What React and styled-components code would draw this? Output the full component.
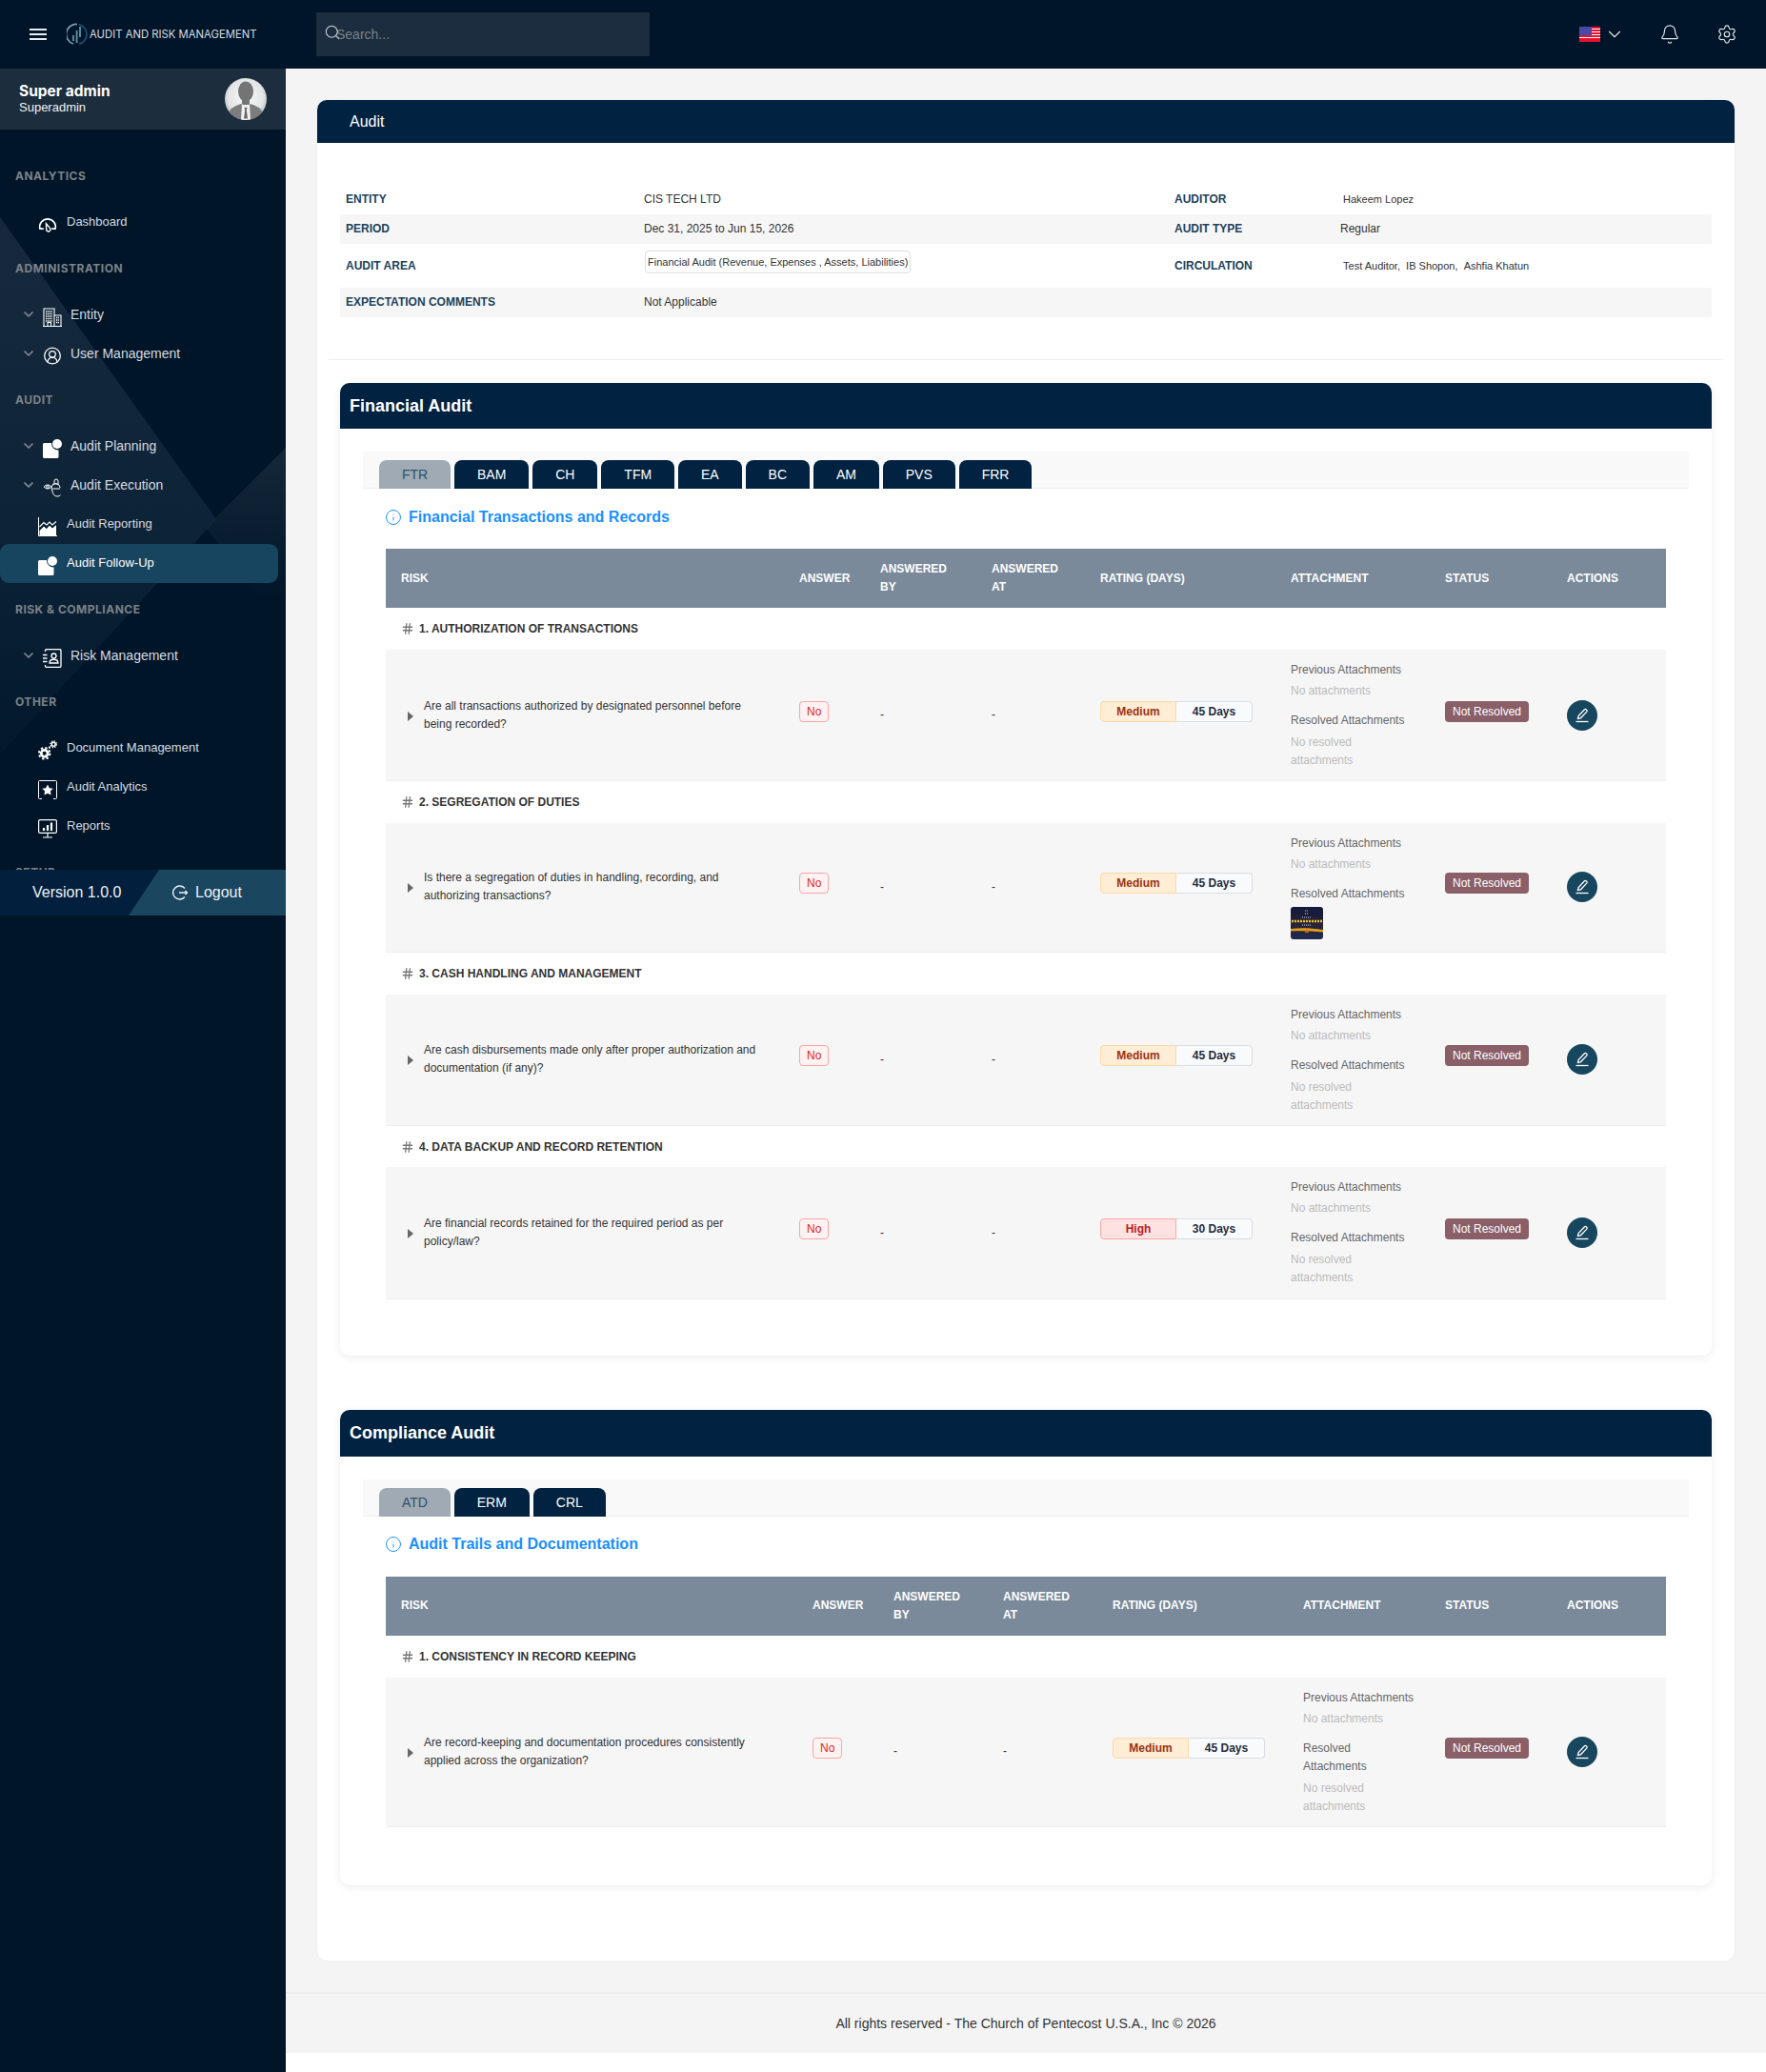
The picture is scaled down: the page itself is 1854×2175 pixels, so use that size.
import React from "react";
import styled, { createGlobalStyle } from "styled-components";
import { Search, ChevronDown, Bell, Settings, Hash, Info, CircleUserRound } from "lucide-react";

const GlobalStyle = createGlobalStyle`
  html, body {
    margin: 0;
    padding: 0;
    background: #fff;
    font-family: "Liberation Sans", Arial, sans-serif;
  }
  * {
    box-sizing: border-box;
  }
`;

const Shell = styled.div`
  width: 1854px;
  min-height: 2175px;
  display: flex;
  flex-direction: column;
`;

/* top bar */
const TopBar = styled.header`
  height: 72px;
  flex: none;
  background: #001529;
  display: flex;
  align-items: center;
  padding-right: 30px;
`;
const Brand = styled.div`
  width: 332px;
  display: flex;
  align-items: center;
  padding-left: 31px;
`;
const Burger = styled.div`
  width: 18px;
  display: flex;
  flex-direction: column;
  gap: 3px;
  margin-right: 21px;
  span {
    display: block;
    height: 2px;
    background: #e8edf1;
  }
`;
const BrandName = styled.span`
  font-family: Inter, "Liberation Sans", sans-serif;
  font-size: 11.3px;
  color: #d5dbe0;
  margin-left: 2px;
  white-space: nowrap;
`;
const SearchBox = styled.div`
  position: relative;
  width: 350px;
  height: 46px;
`;
const SearchInput = styled.input`
  width: 100%;
  height: 100%;
  border: 0;
  outline: 0;
  background: #1b2d3f;
  padding: 0 0 0 21px;
  font-family: "Liberation Sans", Arial, sans-serif;
  font-size: 14px;
  color: #fff;
  &::placeholder {
    color: #77818c;
  }
`;
const SearchGlyph = styled.span`
  position: absolute;
  left: 8px;
  top: 12px;
  color: #d0d5da;
  display: flex;
`;
const TopActions = styled.div`
  margin-left: auto;
  display: flex;
  align-items: center;
  color: #e3e7ea;
`;
const LangPick = styled.div`
  display: flex;
  align-items: center;
  gap: 4.5px;
  margin-right: 35.5px;
`;
const TopIcon = styled.span`
  display: flex;
  margin-left: ${(p) => p.$gap || 0}px;
`;

/* sidebar */
const Body = styled.div`
  flex: 1;
  display: flex;
`;
const Sidebar = styled.aside`
  width: 300px;
  flex: none;
  background: #001528;
  position: relative;
  overflow: hidden;
  &::before {
    content: "";
    position: absolute;
    inset: 0;
    background: linear-gradient(180deg, #16293c 200px, #0d2337 480px, #001528 780px);
    clip-path: polygon(0 156px, 227px 473px, 0 720px);
  }
  &::after {
    content: "";
    position: absolute;
    inset: 0;
    background: linear-gradient(180deg, #15283a 400px, rgba(10, 31, 52, 0) 560px);
    clip-path: polygon(300px 398px, 300px 590px, 216px 482px);
  }
`;
const SideContent = styled.div`
  position: relative;
  z-index: 1;
`;
const UserBox = styled.div`
  height: 64px;
  background: #1c2d3e;
  display: flex;
  align-items: center;
  justify-content: space-between;
  padding: 0 20px;
`;
const UserName = styled.div`
  font-family: Inter, "Liberation Sans", sans-serif;
  font-weight: 700;
  font-size: 15.5px;
  line-height: 18px;
  color: #fff;
  margin-top: -1px;
`;
const UserRole = styled.div`
  font-size: 13px;
  line-height: 15px;
  color: #f0f2f4;
`;
const Nav = styled.nav`
  height: 777px;
  overflow: hidden;
  padding-top: 41px;
`;
const NavGroup = styled.div`
  margin-bottom: 20px;
`;
const NavLabel = styled.div`
  font-family: Inter, "Liberation Sans", sans-serif;
  font-size: 12px;
  line-height: 16px;
  font-weight: 700;
  color: #7c8288;
  padding-left: 16px;
  margin-bottom: 20px;
  letter-spacing: 0.5px;
`;
const NavItem = styled.div`
  height: 41px;
  width: 292px;
  display: flex;
  align-items: center;
  border-radius: 9px;
  padding-left: ${(p) => (p.$caret ? 24 : 40)}px;
  font-size: ${(p) => (p.$caret ? 14 : 13)}px;
  color: ${(p) => (p.$active ? "#fff" : "#d6dbe0")};
  background: ${(p) => (p.$active ? "#17445f" : "transparent")};
`;
const Caret = styled.span`
  width: 16px;
  margin-right: 5px;
  margin-left: -2px;
  color: #7f8a94;
  display: flex;
  margin-top: -2px;
`;
const NavIcon = styled.span`
  width: 20px;
  height: 20px;
  margin-left: ${(p) => (p.$caret ? 2 : 0)}px;
  margin-right: ${(p) => (p.$caret ? 9 : 10)}px;
  margin-top: 4px;
  display: flex;
  align-items: center;
  justify-content: center;
  color: #fff;
`;
const NavText = styled.span`
  margin-top: -2px;
`;
const SideBottom = styled.div`
  height: 48px;
  display: flex;
  background: #02203d;
`;
const VersionTag = styled.div`
  width: 135px;
  padding-left: 34px;
  display: flex;
  align-items: center;
  font-size: 16px;
  color: #eef1f3;
  white-space: nowrap;
`;
const LogoutTag = styled.div`
  flex: 1;
  background: #1a4660;
  clip-path: polygon(32px 0, 100% 0, 100% 100%, 0 100%);
  display: flex;
  align-items: center;
  gap: 8px;
  padding-left: 46px;
  font-size: 16px;
  color: #eef1f3;
`;

/* main */
const Main = styled.main`
  flex: 1;
  min-width: 0;
`;
const Content = styled.div`
  background: #f4f4f4;
  padding: 33px 33px 33px;
`;
const PageCard = styled.div`
  background: #fff;
  border-radius: 10px;
  box-shadow: 0 0 3px rgba(0, 0, 0, 0.05);
  padding-bottom: 79px;
`;
const PageHead = styled.div`
  height: 45px;
  background: #012241;
  border-radius: 10px 10px 0 0;
  color: #fff;
  font-size: 16px;
  display: flex;
  align-items: center;
  padding-left: 34px;
`;
const PageBody = styled.div`
  padding: 44px 24px 0;
`;
const InfoTable = styled.div`
  margin-bottom: 44px;
`;
const InfoRow = styled.div`
  display: grid;
  grid-template-columns: 313px 557px 174px 1fr;
  align-items: center;
  height: ${(p) => p.$h || 31}px;
  padding: 0 0 1px 6px;
  background: ${(p) => (p.$shade ? "#f6f6f6" : "transparent")};
`;
const InfoLabel = styled.div`
  font-size: 12px;
  font-weight: 700;
  color: #21425c;
`;
const InfoValue = styled.div`
  font-size: ${(p) => p.$size || 12}px;
  color: #333;
`;
const AreaChip = styled.span`
  display: block;
  width: fit-content;
  border: 1px solid #dedede;
  border-radius: 4px;
  font-size: 11px;
  line-height: 22px;
  padding: 0 2px;
  margin: 0 0 8px 1px;
`;
const Rule = styled.hr`
  border: 0;
  border-top: 1px solid #eee;
  margin: 0 -12px 24px;
`;
const SectionCard = styled.section`
  background: #fff;
  border-radius: 10px;
  box-shadow: 0 2px 10px rgba(0, 0, 0, 0.08);
  padding-bottom: ${(p) => p.$pb}px;
  margin-bottom: 57px;
  &:last-child {
    margin-bottom: 0;
  }
`;
const SectionHead = styled.h2`
  margin: 0;
  height: ${(p) => p.$h || 48}px;
  background: #012241;
  border-radius: 10px 10px 0 0;
  color: #fff;
  font-size: 18px;
  font-weight: 700;
  display: flex;
  align-items: center;
  padding-left: 10px;
`;
const TabStrip = styled.div`
  margin: 24px 24px 0;
  height: 39px;
  padding: 9px 0 0 17px;
  background: #f9f9f9;
  border-bottom: 1px solid #eee;
  display: flex;
  gap: 4px;
`;
const Tab = styled.div`
  height: 30px;
  padding: 0 23.95px;
  border-radius: 8px 8px 0 0;
  font-size: 14px;
  line-height: 30px;
  color: ${(p) => (p.$active ? "#2e5169" : "#fff")};
  background: ${(p) => (p.$active ? "#a0aab4" : "#012241")};
`;
const TopicTitle = styled.h3`
  margin: 20px 0 24px 47px;
  height: 19px;
  display: flex;
  align-items: center;
  gap: 7px;
  color: #1890ff;
  font-size: 16px;
  font-weight: 700;
`;
const RiskTable = styled.table`
  width: 1344px;
  margin-left: 48px;
  border-collapse: collapse;
  table-layout: fixed;
`;
const HeadCell = styled.th`
  height: 62px;
  background: #7a8a9b;
  color: #fff;
  font-size: 12px;
  line-height: 19px;
  font-weight: 700;
  text-align: left;
  padding: 0 16px;
`;
const CategoryCell = styled.td`
  height: 44px;
  padding: 0 0 0 16px;
  font-size: 12px;
  font-weight: 700;
  color: #333;
`;
const CategoryInner = styled.div`
  display: flex;
  align-items: center;
  gap: 5px;
  color: #333;
  svg {
    color: #777;
  }
`;
const Row = styled.tr`
  background: #f6f6f6;
  border-bottom: 1px solid #eee;
`;
const Cell = styled.td`
  padding: 0 16px;
  vertical-align: middle;
  font-size: 12px;
  line-height: 19px;
  color: #333;
`;
const AttachCell = styled(Cell)`
  padding: 12px 16px 11.3px;
`;
const RiskInner = styled.div`
  display: flex;
  align-items: center;
  gap: 11px;
  padding-left: 7px;
`;
const Expander = styled.span`
  flex: none;
  width: 0;
  height: 0;
  border-left: 6px solid #666;
  border-top: 5px solid transparent;
  border-bottom: 5px solid transparent;
  margin-top: 2px;
`;
const AnswerTag = styled.span`
  display: block;
  width: fit-content;
  height: 22px;
  line-height: 20px;
  padding: 0 7px;
  margin-bottom: 8px;
  border: 1px solid #fca5a5;
  border-radius: 4px;
  background: #fef2f2;
  color: #dc2626;
`;
const Rating = styled.div`
  display: flex;
  margin-bottom: 8px;
  width: 160px;
  height: 22px;
  font-weight: 700;
  line-height: 20px;
  text-align: center;
`;
const RatingLevel = styled.span`
  width: 80px;
  border: 1px solid ${(p) => (p.$high ? "#fca5a5" : "#fdd9a8")};
  border-radius: 4px 0 0 4px;
  background: ${(p) => (p.$high ? "#fee2e2" : "#ffedd5")};
  color: ${(p) => (p.$high ? "#b91c1c" : "#9a3412")};
`;
const RatingDays = styled.span`
  width: 80px;
  border: 1px solid #d9dde3;
  border-left: 0;
  border-radius: 0 4px 4px 0;
  background: #f9fafb;
  color: #1f2d3d;
`;
const AttachTitle = styled.div`
  color: #666;
  margin-bottom: ${(p) => p.$mb || 3}px;
`;
const AttachEmpty = styled.div`
  color: #bbb;
  margin-bottom: ${(p) => p.$mb || 0}px;
`;
const Thumb = styled.div`
  width: 34px;
  height: 34px;
  display: flex;
  border-radius: 3px;
  overflow: hidden;
  margin-bottom: 2px;
`;
const StatusTag = styled.span`
  display: block;
  width: fit-content;
  height: 22px;
  line-height: 22px;
  padding: 0 8px;
  margin-bottom: 8px;
  border-radius: 4px;
  background: #8a5f68;
  color: #fff;
  white-space: nowrap;
`;
const EditButton = styled.button`
  width: 32px;
  height: 32px;
  border: 0;
  border-radius: 50%;
  background: #17465f;
  color: #fff;
  padding: 0;
  display: flex;
  align-items: center;
  justify-content: center;
`;
const Footer = styled.footer`
  height: 64px;
  background: #f4f4f4;
  border-top: 2px solid #ebebeb;
  display: flex;
  align-items: center;
  justify-content: center;
  font-size: 14px;
  color: #333;
`;

/* drawings */
const Logo = () => (
  <svg width="22" height="24" viewBox="0 0 22 24" fill="none">
    <path d="M11 1.5A10.5 10.5 0 0 0 7 22" stroke="#6d9eab" strokeWidth="1.8" />
    <path d="M13 1.8a10.5 10.5 0 0 1 0 20.4" stroke="#1d4f6b" strokeWidth="1.8" />
    <path d="M7 19v-6M10.6 21V8M14 15V4" stroke="#5f95a6" strokeWidth="1.8" />
  </svg>
);

const Flag = () => (
  <svg width="22" height="16" viewBox="0 0 22 16" shapeRendering="crispEdges">
    <rect width="22" height="16" fill="#fff" />
    {[0, 3, 6, 9, 12, 14].map((y) => (
      <rect key={y} y={y} width="22" height="2" fill="#e8112d" />
    ))}
    <rect width="13" height="9" fill="#4a4aa6" />
  </svg>
);

const Avatar = () => (
  <svg width="44" height="44" viewBox="0 0 44 44">
    <defs>
      <radialGradient id="avatarBg" cx="50%" cy="45%" r="60%">
        <stop offset="0%" stopColor="#fbfbfb" />
        <stop offset="70%" stopColor="#e2e4e5" />
        <stop offset="100%" stopColor="#a9adb0" />
      </radialGradient>
      <clipPath id="avatarClip">
        <circle cx="22" cy="22" r="22" />
      </clipPath>
    </defs>
    <circle cx="22" cy="22" r="22" fill="url(#avatarBg)" />
    <g clipPath="url(#avatarClip)">
      <ellipse cx="22" cy="14" rx="8" ry="10.5" fill="#747474" />
      <path d="M18 21h8v7h-8z" fill="#747474" />
      <path d="M5 44v-8c0-5 7-7 12-9l5 4 5-4c5 2 12 4 12 9v8z" fill="#7d7d7d" />
      <path d="M18 27l4 4 4-4 1 17H17z" fill="#f2f2f2" />
      <path d="M20.5 31h3l-.7 2.5 1.2 9h-4l1.2-9z" fill="#666" />
    </g>
  </svg>
);

const GaugeIcon = () => (
  <svg width="20" height="18" viewBox="0 0 24 20" fill="none" stroke="currentColor" strokeWidth="2">
    <path d="M7 15H2.3a10 10 0 1 1 19.4 0H17" />
    <path d="M10.2 8.5l4.4 5.2a2.6 2.6 0 1 1-4.2 2z" strokeWidth="1.7" />
  </svg>
);

const BuildingIcon = () => (
  <svg width="20" height="20" viewBox="0 0 20 20" fill="none" stroke="currentColor" strokeWidth="1.1">
    <path d="M1 19.5V1h11v18.5M0 19.5h20M12 8h7v11.5M5 19.5v-4h3.5v4" />
    <path d="M3 4h7M3 6.5h7M3 9h7M3 11.5h7M3 14h7M14 10.5h3M14 13h3M14 15.5h3" strokeDasharray="1.4 .7" strokeWidth="1.5" />
  </svg>
);

const NoteDotIcon = () => (
  <svg width="20" height="20" viewBox="0 0 20 20" fill="#fff">
    <path d="M1.5 4H9a7 7 0 0 0 7.5 7.5v7a1.5 1.5 0 0 1-1.5 1.5H1.5A1.5 1.5 0 0 1 0 18.5v-13A1.5 1.5 0 0 1 1.5 4z" />
    <circle cx="15" cy="5" r="5" />
  </svg>
);

const ExecutionIcon = () => (
  <svg width="20" height="20" viewBox="0 0 20 20" fill="none" stroke="currentColor" strokeWidth="1">
    <path d="M1 9c2-2.6 6-2.6 8 0-2 2.6-6 2.6-8 0z" />
    <circle cx="5" cy="9" r="1.4" />
    <path d="M12 5V3a2 2 0 1 1 4 0v3M10 6.5c1.500-1 5-1 7 .5M18 10a4.500 4.500 0 1 0-8 3c0 3 2 6 5 6 1.500 0 3-.5 3.500-1.500M10 11h8" />
  </svg>
);

const ChartIcon = () => (
  <svg width="20" height="20" viewBox="0 0 20 20" fill="none">
    <path d="M.5 0v19.500H20" stroke="#fff" strokeWidth="1" />
    <path d="M1.500 19v-5L6 9.500l3 2.500 3-3.500 3 3 4-3.500V19z" fill="#fff" />
    <path d="M1.500 10L6 5.500l3 2.500 3-3 3 3 4-3.500" stroke="#fff" strokeWidth="1.100" />
    <path d="M1.500 13L6 8.700l3 2.500 3-3.500 3 3 4-3.500" stroke="#001528" strokeWidth="1" />
  </svg>
);

const RiskBookIcon = () => (
  <svg width="20" height="20" viewBox="0 0 20 20" fill="none" stroke="currentColor" strokeWidth="1.300">
    <path d="M2.500 3V2a1.500 1.500 0 0 1 1.500-1.500h13.500A1.500 1.500 0 0 1 19 2v16a1.500 1.500 0 0 1-1.500 1.500H4A1.500 1.500 0 0 1 2.500 18v-1" />
    <path d="M0 6.500h4.500M0 10h4.500M0 13.500h4.500" />
    <circle cx="11.500" cy="7.500" r="2.500" />
    <path d="M7 15c0-5 9-5 9 0z" />
  </svg>
);

const GearsIcon = () => (
  <svg width="21" height="21" viewBox="0 0 21 21" fill="none" stroke="#fff">
    <circle cx="7" cy="14" r="3.600" strokeWidth="2.800" />
    <circle cx="7" cy="14" r="6" strokeWidth="2.200" strokeDasharray="2.400 2.310" />
    <circle cx="17" cy="4" r="2.100" strokeWidth="1.600" />
    <circle cx="17" cy="4" r="3.500" strokeWidth="1.400" strokeDasharray="1.400 1.350" />
    <circle cx="12.500" cy="7.500" r="1.200" fill="#fff" stroke="none" />
  </svg>
);

const StarBoxIcon = () => (
  <svg width="20" height="20" viewBox="0 0 20 20" fill="none">
    <path d="M4 19.500H1.500a1 1 0 0 1-1-1V1.500a1 1 0 0 1 1-1h17a1 1 0 0 1 1 1v17a1 1 0 0 1-1 1H16" stroke="#fff" strokeWidth="1" />
    <path d="M10 4.500l1.800 3.700 4 .6-2.900 2.800.7 4L10 13.700l-3.600 1.900.7-4-2.900-2.800 4-.6z" fill="#fff" />
  </svg>
);

const MonitorIcon = () => (
  <svg width="20" height="20" viewBox="0 0 20 20" fill="none" stroke="#fff">
    <rect x=".6" y=".6" width="18.800" height="13.800" rx="1.500" strokeWidth="1.200" />
    <path d="M10 14.500v4M5 19h10" strokeWidth="1.200" />
    <path d="M6 12V9M10 12V6M14 12V3.500" strokeWidth="2.200" />
  </svg>
);

const LogoutIcon = () => (
  <svg width="16" height="16" viewBox="0 0 16 16" fill="none" stroke="#eef1f3" strokeWidth="1.400">
    <path d="M13 3.500A7 7 0 1 0 13 12.500" />
    <path d="M7 8h8.500M13.500 6l2 2-2 2" />
  </svg>
);

const EditIcon = () => (
  <svg width="16" height="16" viewBox="0 0 16 16" fill="none" stroke="currentColor" strokeWidth="1.300">
    <path d="M3.500 11.500l.6-3L10.500 1.800a1.200 1.200 0 0 1 1.700 0l.6.6a1.200 1.200 0 0 1 0 1.700L6.400 10.800z" />
    <path d="M1.500 14.500h13" />
  </svg>
);

const PosterThumb = () => (
  <svg width="34" height="34" viewBox="0 0 34 34">
    <defs>
      <linearGradient id="posterBg" x1="0" y1="0" x2="0" y2="1">
        <stop offset="0%" stopColor="#121a3a" />
        <stop offset="60%" stopColor="#2a2438" />
        <stop offset="100%" stopColor="#1e2a52" />
      </linearGradient>
    </defs>
    <rect width="34" height="34" fill="url(#posterBg)" />
    <path d="M1 15h32" stroke="#f1c21b" strokeWidth="2.500" strokeDasharray="2 1" />
    <path d="M0 23c10-1 20-1 34 1v2.500C20 25 10 25 0 25.500z" fill="#e0a11a" />
    <path d="M15 4h3M15 7h3M12 11h9M12 19h9" stroke="#cfd3e0" strokeWidth="1" strokeDasharray="1 1" />
    <path d="M15 27l2-5 2 5z" fill="#d9671e" />
  </svg>
);

const AppIcon = ({ name }) => {
  switch (name) {
    case "gauge":
      return <GaugeIcon />;
    case "building":
      return <BuildingIcon />;
    case "user":
      return <CircleUserRound size={21} strokeWidth={1.5} />;
    case "note":
      return <NoteDotIcon />;
    case "exec":
      return <ExecutionIcon />;
    case "chart":
      return <ChartIcon />;
    case "risk":
      return <RiskBookIcon />;
    case "cogs":
      return <GearsIcon />;
    case "star":
      return <StarBoxIcon />;
    default:
      return <MonitorIcon />;
  }
};

const navGroups = [
  { label: "ANALYTICS", items: [{ text: "Dashboard", icon: "gauge" }] },
  {
    label: "ADMINISTRATION",
    items: [
      { text: "Entity", icon: "building", caret: true },
      { text: "User Management", icon: "user", caret: true },
    ],
  },
  {
    label: "AUDIT",
    items: [
      { text: "Audit Planning", icon: "note", caret: true },
      { text: "Audit Execution", icon: "exec", caret: true },
      { text: "Audit Reporting", icon: "chart" },
      { text: "Audit Follow-Up", icon: "note", active: true },
    ],
  },
  { label: "RISK & COMPLIANCE", items: [{ text: "Risk Management", icon: "risk", caret: true }] },
  {
    label: "OTHER",
    items: [
      { text: "Document Management", icon: "cogs" },
      { text: "Audit Analytics", icon: "star" },
      { text: "Reports", icon: "monitor" },
    ],
  },
  { label: "SETUP", items: [] },
];

const financialRows = [
  {
    category: "1. AUTHORIZATION OF TRANSACTIONS",
    question: "Are all transactions authorized by designated personnel before being recorded?",
    level: "Medium",
    days: "45 Days",
  },
  {
    category: "2. SEGREGATION OF DUTIES",
    question: "Is there a segregation of duties in handling, recording, and authorizing transactions?",
    level: "Medium",
    days: "45 Days",
    thumb: true,
  },
  {
    category: "3. CASH HANDLING AND MANAGEMENT",
    question: "Are cash disbursements made only after proper authorization and documentation (if any)?",
    level: "Medium",
    days: "45 Days",
  },
  {
    category: "4. DATA BACKUP AND RECORD RETENTION",
    question: "Are financial records retained for the required period as per policy/law?",
    level: "High",
    days: "30 Days",
  },
];

const complianceRows = [
  {
    category: "1. CONSISTENCY IN RECORD KEEPING",
    question: "Are record-keeping and documentation procedures consistently applied across the organization?",
    level: "Medium",
    days: "45 Days",
  },
];

const columns = ["RISK", "ANSWER", "ANSWERED BY", "ANSWERED AT", "RATING (DAYS)", "ATTACHMENT", "STATUS", "ACTIONS"];

const Attachments = ({ thumb }) => (
  <>
    <AttachTitle>Previous Attachments</AttachTitle>
    <AttachEmpty $mb={12}>No attachments</AttachEmpty>
    <AttachTitle $mb={4}>Resolved Attachments</AttachTitle>
    {thumb ? (
      <Thumb>
        <PosterThumb />
      </Thumb>
    ) : (
      <AttachEmpty>No resolved attachments</AttachEmpty>
    )}
  </>
);

const AuditTable = ({ rows, widths }) => (
  <RiskTable>
    <colgroup>
      {widths.map((w, i) => (
        <col key={i} width={w} />
      ))}
    </colgroup>
    <thead>
      <tr>
        {columns.map((c) => (
          <HeadCell key={c}>{c}</HeadCell>
        ))}
      </tr>
    </thead>
    <tbody>
      {rows.map((r) => (
        <React.Fragment key={r.category}>
          <tr>
            <CategoryCell colSpan={8}>
              <CategoryInner>
                <Hash size={14} strokeWidth={2.2} />
                {r.category}
              </CategoryInner>
            </CategoryCell>
          </tr>
          <Row>
            <Cell>
              <RiskInner>
                <Expander />
                <span>{r.question}</span>
              </RiskInner>
            </Cell>
            <Cell>
              <AnswerTag>No</AnswerTag>
            </Cell>
            <Cell>-</Cell>
            <Cell>-</Cell>
            <Cell>
              <Rating>
                <RatingLevel $high={r.level === "High"}>{r.level}</RatingLevel>
                <RatingDays>{r.days}</RatingDays>
              </Rating>
            </Cell>
            <AttachCell>
              <Attachments thumb={r.thumb} />
            </AttachCell>
            <Cell>
              <StatusTag>Not Resolved</StatusTag>
            </Cell>
            <Cell>
              <EditButton>
                <EditIcon />
              </EditButton>
            </Cell>
          </Row>
        </React.Fragment>
      ))}
    </tbody>
  </RiskTable>
);

const AuditSection = ({ title, headH, tabs, topic, rows, widths, pb }) => (
  <SectionCard $pb={pb}>
    <SectionHead $h={headH}>{title}</SectionHead>
    <TabStrip>
      {tabs.map((t, i) => (
        <Tab key={t} $active={i === 0}>
          {t}
        </Tab>
      ))}
    </TabStrip>
    <TopicTitle>
      <Info size={18} strokeWidth={1.3} />
      {topic}
    </TopicTitle>
    <AuditTable rows={rows} widths={widths} />
  </SectionCard>
);

const App = () => (
  <>
    <GlobalStyle />
    <Shell>
      <TopBar>
        <Brand>
          <Burger>
            <span />
            <span />
            <span />
          </Burger>
          <Logo />
          <BrandName>AUDIT AND RISK MANAGEMENT</BrandName>
        </Brand>
        <SearchBox>
          <SearchInput placeholder="Search..." />
          <SearchGlyph>
            <Search size={18} strokeWidth={1.4} />
          </SearchGlyph>
        </SearchBox>
        <TopActions>
          <LangPick>
            <Flag />
            <ChevronDown size={22} strokeWidth={1.2} />
          </LangPick>
          <TopIcon>
            <Bell size={22} strokeWidth={1.3} />
          </TopIcon>
          <TopIcon $gap={38.5}>
            <Settings size={22} strokeWidth={1.3} />
          </TopIcon>
        </TopActions>
      </TopBar>
      <Body>
        <Sidebar>
          <SideContent>
            <UserBox>
              <div>
                <UserName>Super admin</UserName>
                <UserRole>Superadmin</UserRole>
              </div>
              <Avatar />
            </UserBox>
            <Nav>
              {navGroups.map((g) => (
                <NavGroup key={g.label}>
                  <NavLabel>{g.label}</NavLabel>
                  {g.items.map((it) => (
                    <NavItem key={it.text} $caret={it.caret} $active={it.active}>
                      {it.caret && (
                        <Caret>
                          <ChevronDown size={16} strokeWidth={2.6} />
                        </Caret>
                      )}
                      <NavIcon $caret={it.caret}>
                        <AppIcon name={it.icon} />
                      </NavIcon>
                      <NavText>{it.text}</NavText>
                    </NavItem>
                  ))}
                </NavGroup>
              ))}
            </Nav>
            <SideBottom>
              <VersionTag>Version 1.0.0</VersionTag>
              <LogoutTag>
                <LogoutIcon />
                Logout
              </LogoutTag>
            </SideBottom>
          </SideContent>
        </Sidebar>
        <Main>
          <Content>
            <PageCard>
              <PageHead>Audit</PageHead>
              <PageBody>
                <InfoTable>
                  <InfoRow>
                    <InfoLabel>ENTITY</InfoLabel>
                    <InfoValue>CIS TECH LTD</InfoValue>
                    <InfoLabel>AUDITOR</InfoLabel>
                    <InfoValue $size={11}>&nbsp;Hakeem Lopez</InfoValue>
                  </InfoRow>
                  <InfoRow $shade>
                    <InfoLabel>PERIOD</InfoLabel>
                    <InfoValue>Dec 31, 2025 to Jun 15, 2026</InfoValue>
                    <InfoLabel>AUDIT TYPE</InfoLabel>
                    <InfoValue>Regular</InfoValue>
                  </InfoRow>
                  <InfoRow $h={46}>
                    <InfoLabel>AUDIT AREA</InfoLabel>
                    <InfoValue>
                      <AreaChip>Financial Audit (Revenue, Expenses , Assets, Liabilities)</AreaChip>
                    </InfoValue>
                    <InfoLabel>CIRCULATION</InfoLabel>
                    <InfoValue $size={11}>&nbsp;Test Auditor, &nbsp;IB Shopon, &nbsp;Ashfia Khatun</InfoValue>
                  </InfoRow>
                  <InfoRow $shade>
                    <InfoLabel>EXPECTATION COMMENTS</InfoLabel>
                    <InfoValue>Not Applicable</InfoValue>
                  </InfoRow>
                </InfoTable>
                <Rule />
                <AuditSection
                  title="Financial Audit"
                  tabs={["FTR", "BAM", "CH", "TFM", "EA", "BC", "AM", "PVS", "FRR"]}
                  topic="Financial Transactions and Records"
                  rows={financialRows}
                  widths={[418, 85, 117, 114, 200, 162, 128, 120]}
                  pb={59}
                />
                <AuditSection
                  title="Compliance Audit"
                  headH={49}
                  tabs={["ATD", "ERM", "CRL"]}
                  topic="Audit Trails and Documentation"
                  rows={complianceRows}
                  widths={[432, 85, 115, 115, 200, 149, 128, 120]}
                  pb={61}
                />
              </PageBody>
            </PageCard>
          </Content>
          <Footer>All rights reserved - The Church of Pentecost U.S.A., Inc © 2026</Footer>
        </Main>
      </Body>
    </Shell>
  </>
);

export default App;
